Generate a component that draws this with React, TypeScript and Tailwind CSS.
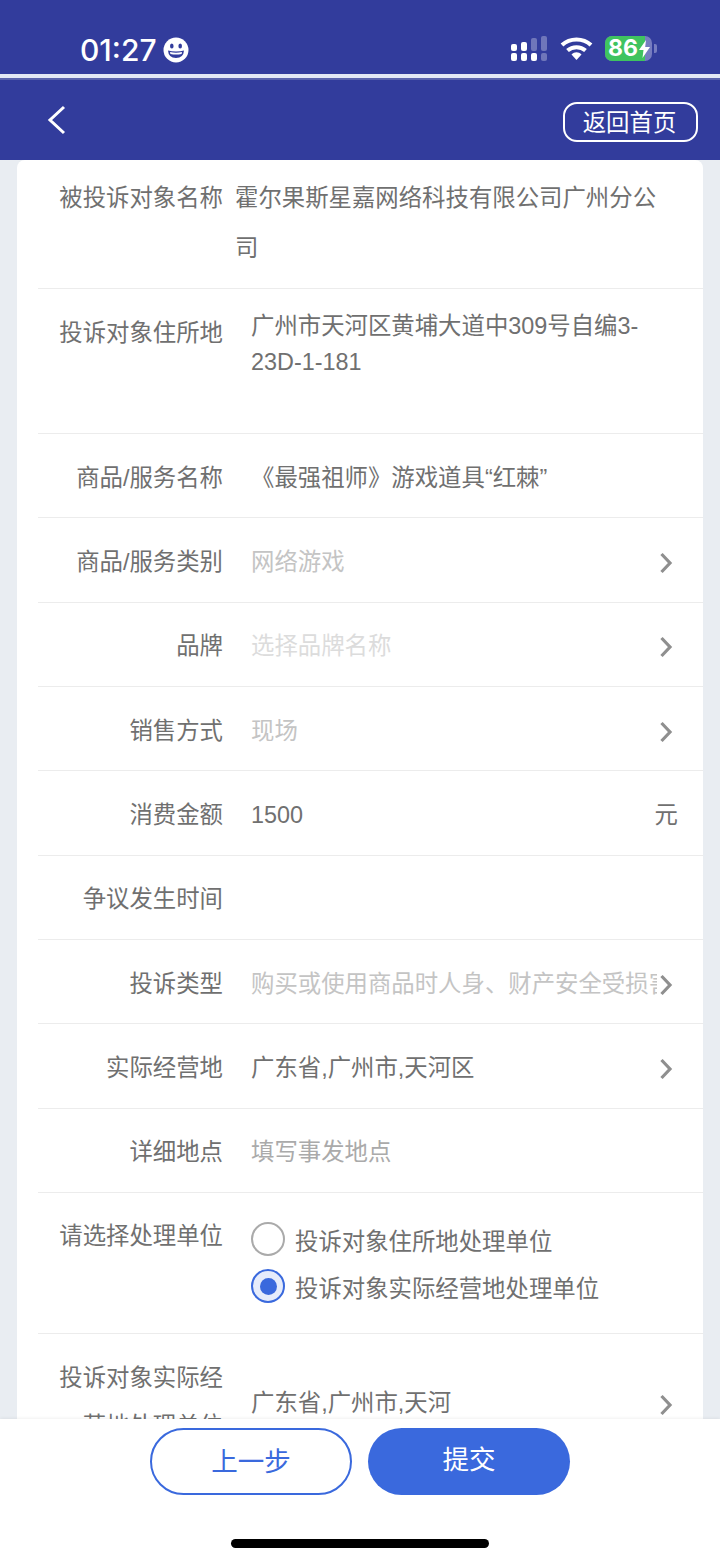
import React from "react";

const font = { fontFamily: '"Noto Sans CJK SC", sans-serif' };
const mixed = { fontFamily: '"Liberation Sans", "Noto Sans CJK SC", sans-serif' };

function Chevron() {
  return (
    <svg width="14" height="22" viewBox="0 0 14 22" className="absolute right-[30px] top-1/2 mt-[3px] -translate-y-1/2" fill="none">
      <path d="M2.5 2 L11 11 L2.5 20" stroke="#8f8f8f" strokeWidth="3.2" />
    </svg>
  );
}

type RowProps = { label: string; value?: string; tone?: string; chevron?: boolean; unit?: string };

function Row({ label, value, tone = "text-[#707070]", chevron, unit }: RowProps) {
  return (
    <div className="relative ml-[21px] flex h-[84.33px] items-center border-b border-[#ececec]">
      <div className="w-[185px] shrink-0 whitespace-nowrap pt-[5px] text-right text-[#707070]" style={mixed}>{label}</div>
      <div className={`ml-[28px] w-[406px] overflow-hidden whitespace-nowrap pt-[5px] ${tone}`} style={mixed}>{value}</div>
      {chevron && <Chevron />}
      {unit && <span className="absolute right-[25px] pt-[1px] text-[#707070]">{unit}</span>}
    </div>
  );
}

function Radio({ checked, label }: { checked?: boolean; label: string }) {
  return (
    <div className="flex h-[47px] items-center">
      <span className={`flex h-[34px] w-[34px] items-center justify-center rounded-full border-2 ${checked ? "border-[#3a69dd] bg-[#e6ecfb]" : "border-[#aaaaaa]"}`}>
        {checked && <span className="h-[17px] w-[17px] rounded-full bg-[#3a69dd]" />}
      </span>
      <span className="ml-[10px] pt-[2px] text-[#707070]">{label}</span>
    </div>
  );
}

export default function App() {
  return (
    <div className="flex h-[1561px] w-[720px] flex-col overflow-hidden bg-[#e9edf2] text-[23.4px]" style={font}>
      <div className="relative h-[74px] shrink-0 bg-[#323c9c] text-white">
        <div className="flex h-full items-center pl-[80px] pt-[25px]">
          <span className="text-[30px] font-medium leading-none" style={{ fontFamily: "Inter, sans-serif" }}>01:27</span>
          <svg width="26" height="26" viewBox="0 0 26 26" className="ml-[6px]">
            <circle cx="13" cy="13" r="12.5" fill="#fff" />
            <ellipse cx="8.8" cy="9" rx="1.8" ry="2.6" fill="#323c9c" />
            <ellipse cx="17.2" cy="9" rx="1.8" ry="2.6" fill="#323c9c" />
            <path d="M5 13.5 Q13 15.5 21 13.5 Q20.5 21 13 21 Q5.5 21 5 13.5Z" fill="#323c9c" />
            <path d="M7 15 Q13 16.5 19 15 L18.6 17 Q13 18 7.4 17Z" fill="#fff" />
          </svg>
        </div>
        <div className="absolute left-[511px] top-[36px]">
          <svg width="38" height="26" viewBox="0 0 38 26">
            <rect x="0" y="8" width="6" height="7" rx="2" fill="#fff" />
            <rect x="10" y="6" width="6" height="9" rx="2" fill="#fff" />
            <rect x="20" y="2" width="6" height="13" rx="2" fill="#fff" fillOpacity="0.3" />
            <rect x="30" y="0" width="6" height="15" rx="2" fill="#fff" fillOpacity="0.3" />
            <rect x="0" y="17" width="6" height="8" rx="2" fill="#fff" />
            <rect x="10" y="17" width="6" height="8" rx="2" fill="#fff" />
            <rect x="20" y="17" width="6" height="8" rx="2" fill="#fff" />
            <rect x="30" y="17" width="6" height="8" rx="2" fill="#fff" fillOpacity="0.3" />
          </svg>
        </div>
        <div className="absolute left-[560px] top-[36px]">
          <svg width="33" height="25" viewBox="0 0 33 25" fill="none">
            <path d="M2 9 C10 1.5 23 1.5 31 9" stroke="#fff" strokeWidth="4" />
            <path d="M7.5 14.5 C12.5 10 20.5 10 25.5 14.5" stroke="#fff" strokeWidth="4" />
            <path d="M11.5 18.5 C14.5 15.5 18.5 15.5 21.5 18.5 L16.5 24Z" fill="#fff" />
          </svg>
        </div>
        <div className="absolute left-[605px] top-[36px] flex h-[25px] w-[47px] items-center rounded-[7px] bg-[#767cc0]">
          <div className="flex h-full w-[40px] items-center rounded-l-[7px] bg-[#3fc35f] pl-[3px] text-[23px] font-bold leading-none" style={{ fontFamily: "Inter, sans-serif" }}>86</div>
          <svg width="11" height="18" viewBox="0 0 11 18" className="absolute left-[34px] top-[4px]">
            <path d="M7 0 L0 10 H4.5 L3.5 18 L11 7 H6.2Z" fill="#fff" />
          </svg>
        </div>
        <div className="absolute left-[654px] top-[44px] h-[9px] w-[3px] rounded-r-[2px] bg-[#767cc0]" />
      </div>
      <div className="h-[6px] shrink-0 border-b-[2px] border-[#5a63ad] bg-[#e3e8f5]" />
      <div className="flex h-[80px] shrink-0 items-center justify-between bg-[#323c9c] pl-[47px] pr-[22px]">
        <svg width="20" height="30" viewBox="0 0 20 30" fill="none">
          <path d="M17 2 L3 15 L17 28" stroke="#fff" strokeWidth="3" />
        </svg>
        <div className="mt-[3px] flex h-[40px] w-[135px] items-center justify-center rounded-[14px] border-2 border-white pr-[2px] text-[23.4px] text-white">返回首页</div>
      </div>
      <main className="min-h-0 flex-1 overflow-hidden px-[17px]">
        <div className="rounded-t-[8px] bg-white">
          <div className="ml-[21px] flex h-[129px] border-b border-[#ececec] pt-[11px] leading-[50px]">
            <div className="w-[185px] shrink-0 whitespace-nowrap text-right text-[#707070]">被投诉对象名称</div>
            <div className="ml-[12px] w-[426px] text-[#707070]">霍尔果斯星嘉网络科技有限公司广州分公司</div>
          </div>
          <div className="ml-[21px] flex h-[145px] border-b border-[#ececec] pt-[19px]">
            <div className="w-[185px] shrink-0 whitespace-nowrap pt-[5px] text-right leading-[36px] text-[#707070]">投诉对象住所地</div>
            <div className="ml-[28px] w-[400px] leading-[36px] text-[#707070]" style={mixed}>广州市天河区黄埔大道中309号自编3-23D-1-181</div>
          </div>
          <Row label="商品/服务名称" value="《最强祖师》游戏道具“红棘”" />
          <Row label="商品/服务类别" value="网络游戏" tone="text-[#c4c4c4]" chevron />
          <Row label="品牌" value="选择品牌名称" tone="text-[#dcdcdc]" chevron />
          <Row label="销售方式" value="现场" tone="text-[#c4c4c4]" chevron />
          <Row label="消费金额" value="1500" unit="元" />
          <Row label="争议发生时间" />
          <Row label="投诉类型" value="购买或使用商品时人身、财产安全受损害" tone="text-[#c4c4c4]" chevron />
          <Row label="实际经营地" value="广东省,广州市,天河区" chevron />
          <Row label="详细地点" value="填写事发地点" tone="text-[#aaaaaa]" />
          <div className="ml-[21px] flex h-[141px] border-b border-[#ececec] pt-[17px]">
            <div className="w-[185px] shrink-0 whitespace-nowrap text-right leading-[48px] text-[#707070]">请选择处理单位</div>
            <div className="ml-[28px] pt-[6px]">
              <Radio label="投诉对象住所地处理单位" />
              <Radio checked label="投诉对象实际经营地处理单位" />
            </div>
          </div>
          <div className="relative ml-[21px] flex h-[120px] pt-[18px]">
            <div className="w-[185px] shrink-0 text-right leading-[48px] text-[#707070]">
              <div className="ml-auto w-[165px]">投诉对象实际经营地处理单位</div>
            </div>
            <div className="ml-[28px] pt-[27px] leading-[48px] text-[#707070]" style={mixed}>广东省,广州市,天河</div>
            <div className="absolute inset-x-0 top-[58px] h-[20px]"><Chevron /></div>
          </div>
        </div>
      </main>
      <footer className="relative z-10 h-[142px] shrink-0 bg-white shadow-[0_-1px_3px_rgba(0,0,0,0.06)]">
        <div className="flex justify-center gap-[16px] pt-[9px]">
          <div className="flex h-[67px] w-[202px] items-center justify-center rounded-full border-2 border-[#3a69dd] pb-[4px] text-[26.5px] text-[#3a69dd]">上一步</div>
          <div className="flex h-[67px] w-[202px] items-center justify-center rounded-full bg-[#3a69dd] pb-[7px] text-[26.5px] text-white">提交</div>
        </div>
        <div className="mx-auto mt-[44px] h-[9px] w-[258px] rounded-full bg-black" />
      </footer>
    </div>
  );
}
